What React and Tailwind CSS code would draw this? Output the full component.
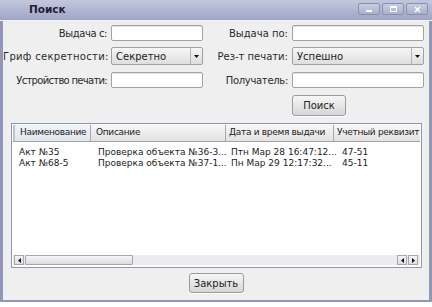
import React from 'react'

const font = { fontFamily: '"DejaVu Sans", "Liberation Sans", sans-serif' }

function TitleButton({ children }){
  return (
    <div className="w-[22px] h-[12px] rounded-[2px] border border-[#8a8fae] bg-gradient-to-b from-[#c9cde2] to-[#aab0cc] flex items-center justify-center">
      {children}
    </div>
  )
}

function TextInput({ w }){
  return <div className={`${w} h-[16px] bg-white border border-[#a3a3a3] rounded-[2px] shadow-[inset_0_1px_0_#e4e4e4]`} />
}

function Select({ w, value }){
  return (
    <div className={`${w} h-[18px] flex border border-[#a0a0a0] rounded-[2px] bg-gradient-to-b from-[#f6f6f6] to-[#dedede]`}>
      <div className="flex-1 flex items-center pl-[4px] text-[10px] text-[#222]">{value}</div>
      <div className="w-[12px] border-l border-[#b5b5b5] flex items-center justify-center">
        <svg width="5" height="3" viewBox="0 0 5 3"><path d="M0 0H5L2.5 3Z" fill="#111" /></svg>
      </div>
    </div>
  )
}

function Button({ label, w }){
  return (
    <div className={`${w} h-full flex items-center justify-center border border-[#9b9b9b] rounded-[3px] bg-gradient-to-b from-[#f7f7f7] to-[#d6d6d6] text-[10px] text-[#222] shadow-[0_1px_0_#ffffff]`}>
      {label}
    </div>
  )
}

function Arrow({ dir }){
  return (
    <div className="w-[10px] h-[10px] border border-[#a8a8a8] bg-gradient-to-b from-[#f6f6f6] to-[#dcdcdc] flex items-center justify-center">
      <svg width="3" height="5" viewBox="0 0 3 5">
        {dir === 'left' ? <path d="M3 0V5L0 2.5Z" fill="#111" /> : <path d="M0 0V5L3 2.5Z" fill="#111" />}
      </svg>
    </div>
  )
}

const rows = [
  { name: 'Акт №35', desc: 'Проверка объекта №36-3...', date: 'Птн Мар 28 16:47:12...', req: '47-51' },
  { name: 'Акт №68-5', desc: 'Проверка объекта №37-1...', date: 'Пн Мар 29 12:17:32...', req: '45-11' },
]

export default function App(){
  return (
    <div style={font} className="w-[432px] h-[307px] bg-white overflow-hidden">
      <div className="h-[302px] flex flex-col border-x-[3px] border-b-[2px] border-[#9397b7] bg-[#efefef]">
        {/* Title bar */}
        <div className="h-[21px] -mx-[3px] flex items-center bg-gradient-to-b from-[#c3c7de] to-[#a0a5c5] border-b border-[#f4f4f8]">
          <span className="ml-[29px] text-[10.5px] font-bold text-[#1e2030]">Поиск</span>
          <div className="ml-auto mr-[4px] flex gap-[2px] mb-[2px]">
            <TitleButton><div className="w-[6px] h-[2px] bg-white mt-[4px]" /></TitleButton>
            <TitleButton><div className="w-[7px] h-[6px] border border-white border-t-2" /></TitleButton>
            <TitleButton>
              <svg width="7" height="7" viewBox="0 0 7 7"><path d="M1 1L6 6M6 1L1 6" stroke="#fff" strokeWidth="1.4" /></svg>
            </TitleButton>
          </div>
        </div>

        {/* Form */}
        <div className="grid grid-cols-[104px_92px_81px_132px] gap-x-[4px] gap-y-[6px] mt-[4px] text-[10px] text-[#2a2a2a] items-center whitespace-nowrap">
          <div className="text-right tracking-[-0.4px]">Выдача с:</div>
          <TextInput w="w-[92px]" />
          <div className="text-right">Выдача по:</div>
          <TextInput w="w-[132px]" />

          <div className="text-right tracking-[0.3px]">Гриф секретности:</div>
          <Select w="w-[92px]" value="Секретно" />
          <div className="text-right">Рез-т печати:</div>
          <Select w="w-[132px]" value="Успешно" />

          <div className="text-right mt-[1px] tracking-[-0.7px]">Устройство печати:</div>
          <div className="mt-[1px]"><TextInput w="w-[92px]" /></div>
          <div className="text-right mt-[1px] tracking-[-0.3px]">Получатель:</div>
          <div className="mt-[1px]"><TextInput w="w-[132px]" /></div>

          <div className="col-start-4 h-[21px] mt-[1px]"><Button label="Поиск" w="w-[54px]" /></div>
        </div>

        {/* Table */}
        <div className="mt-[7px] ml-[8px] w-[411px] h-[145px] border border-[#8e98b0] bg-white flex flex-col p-px">
          <div className="h-[17px] flex text-[9px] tracking-[-0.3px] text-[#222] border-b border-[#a5a5a5] bg-gradient-to-b from-[#f7f7f7] to-[#e2e2e2] whitespace-nowrap">
            <div className="w-[78px] pl-[5px] flex items-center overflow-hidden border-l-2 border-r border-l-[#b8c4dc] border-r-[#a8a8a8] bg-gradient-to-b from-[#f2f4fa] to-[#e1e5ef]">Наименование</div>
            <div className="w-[135px] pl-[5px] flex items-center border-r border-[#a8a8a8]">Описание</div>
            <div className="w-[108px] pl-[3px] flex items-center overflow-hidden border-r border-[#a8a8a8]">Дата и время выдачи</div>
            <div className="flex-1 pl-[3px] flex items-center overflow-hidden">Учетный реквизит</div>
          </div>
          <div className="flex-1 pt-[5px] text-[9px] text-[#222]">
            {rows.map(r => (
              <div key={r.name} className="h-[11px] flex items-center leading-none whitespace-nowrap">
                <div className="w-[80px] pl-[6px] overflow-hidden">{r.name}</div>
                <div className="w-[135px] pl-[5px] overflow-hidden">{r.desc}</div>
                <div className="w-[108px] pl-[3px] overflow-hidden">{r.date}</div>
                <div className="flex-1 pl-[6px]">{r.req}</div>
              </div>
            ))}
          </div>
          <div className="h-[10px] mb-[1px] flex items-center px-[1px] bg-[#ececec]">
            <Arrow dir="left" />
            <div className="w-[108px] h-[10px] ml-px border border-[#a8a8a8] rounded-[1px] bg-gradient-to-b from-[#f6f6f6] to-[#dcdcdc] flex items-center justify-center">
              <div className="w-[10px] h-[5px] bg-[radial-gradient(#b0b0b0_0.6px,transparent_0.7px)] bg-[length:2px_2px]" />
            </div>
            <div className="flex-1" />
            <Arrow dir="left" />
            <div className="ml-px mr-[1px]"><Arrow dir="right" /></div>
          </div>
        </div>

        {/* Footer */}
        <div className="mt-[5px] h-[20px] flex justify-center">
          <Button label="Закрыть" w="w-[55px]" />
        </div>
      </div>
    </div>
  )
}
